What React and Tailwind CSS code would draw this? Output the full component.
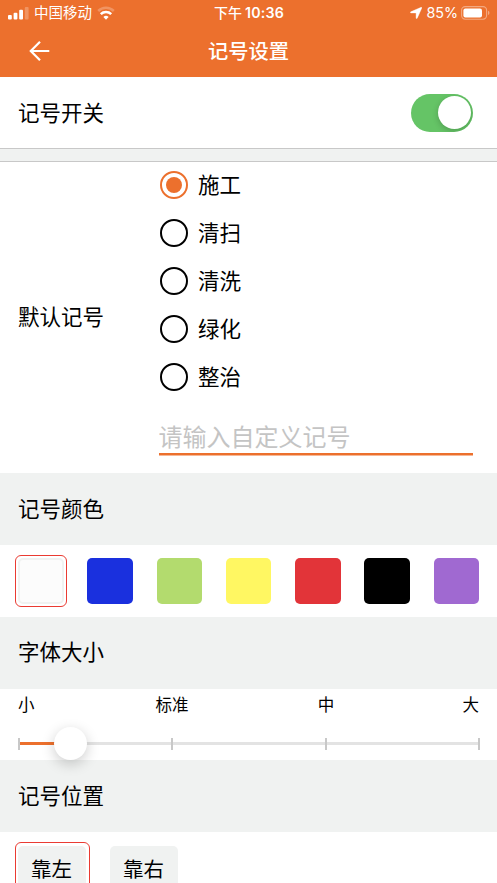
import React, { useState } from 'react';

const MARKS = ['施工', '清扫', '清洗', '绿化', '整治'];

const COLORS = [
  { name: 'white', className: 'bg-[#fcfcfc] border-2 border-[#f0f2f1]' },
  { name: 'blue', className: 'bg-[#1a30de]' },
  { name: 'green', className: 'bg-[#b3db6e]' },
  { name: 'yellow', className: 'bg-[#fff762]' },
  { name: 'red', className: 'bg-[#e23439]' },
  { name: 'black', className: 'bg-black' },
  { name: 'purple', className: 'bg-[#a069d1]' },
];

const SIZES = ['小', '标准', '中', '大'];

const StatusBar = () => (
  <div className="h-[26px] grid grid-cols-[1fr_auto_1fr] items-center pl-2 pr-[7px] text-[14.5px] leading-none">
    <div className="flex items-center">
      <svg width="21" height="13" viewBox="0 0 21 13" fill="#fff">
        <rect x="0" y="8" width="3.8" height="4.5" rx="1" />
        <rect x="5.6" y="5.8" width="3.8" height="6.7" rx="1" />
        <rect x="11.2" y="2.8" width="3.8" height="9.7" rx="1" />
        <rect x="16.8" y="0" width="3.8" height="12.5" rx="1" opacity="0.25" />
      </svg>
      <span className="ml-[5px] -mr-px pt-px">中国移动</span>
      <svg className="ml-[6px]" width="18" height="14" viewBox="0 0 18 14" fill="none" stroke="#fff" strokeWidth="2.5">
        <path d="M1.2 5a11 11 0 0 1 15.6 0" opacity="0.25" />
        <path d="M3.8 8.1a7.4 7.4 0 0 1 10.4 0" />
        <path d="M9 13.7L6.4 11.1a3.7 3.7 0 0 1 5.2 0z" fill="#fff" stroke="none" />
      </svg>
    </div>
    <div className="flex items-center gap-[3px] font-medium">
      <span className="text-[14px]">下午</span>
      <span className="font-['Inter'] font-semibold text-[14.2px] tracking-[0.2px]">10:36</span>
    </div>
    <div className="flex items-center justify-end">
      <svg width="12" height="12" viewBox="0 0 12 12" fill="#fff">
        <path d="M11.2 0.3c.5-.2.8.1.6.6L7.2 11.2c-.3.6-1.1.5-1.1-.2V5.9H1c-.7 0-.8-.8-.2-1.1z" stroke="#fff" strokeWidth="0.4" />
      </svg>
      <span className="ml-[4px] font-['Inter'] text-[14.3px]">85%</span>
      <svg className="ml-[3px]" width="29" height="14" viewBox="0 0 29 14">
        <rect x="0.6" y="0.6" width="25" height="12.6" rx="3.6" fill="none" stroke="#fff" strokeOpacity="0.4" strokeWidth="1.1" />
        <rect x="2.4" y="2.4" width="18.6" height="9" rx="2" fill="#fff" />
        <path d="M27.2 4.8c1.6.6 1.6 3.6 0 4.2z" fill="#fff" opacity="0.5" />
      </svg>
    </div>
  </div>
);

const SectionTitle = ({ children }) => (
  <h2 className="h-[72px] shrink-0 flex items-center pt-[3px] px-[18px] bg-[#f0f2f1] text-[21.5px]">{children}</h2>
);

const App = () => {
  const [enabled, setEnabled] = useState(true);
  const [mark, setMark] = useState('施工');
  const [custom, setCustom] = useState('');
  const [color, setColor] = useState('white');
  const [position, setPosition] = useState('靠左');

  return (
    <div className="h-screen overflow-hidden flex flex-col bg-white text-black leading-none font-['Liberation_Sans','Noto_Sans_CJK_SC',sans-serif]">
      {/* Header */}
      <header className="h-[77px] shrink-0 bg-[#ec702d] text-white">
        <StatusBar />
        <div className="h-[49px] grid grid-cols-[1fr_auto_1fr] items-center">
          <button className="ml-[29px] w-[21px]">
            <svg width="21" height="20" viewBox="0 0 21 20" fill="none" stroke="#fff" strokeWidth="2.2">
              <path d="M20.3 10H2M11 .8L1.8 10l9.2 9.2" />
            </svg>
          </button>
          <h1 className="text-[20.3px] font-medium pt-[3px]">记号设置</h1>
        </div>
      </header>

      {/* Switch */}
      <div className="h-[71px] shrink-0 flex items-center justify-between pl-[18px] pr-6">
        <span className="pt-[4px] text-[21.5px]">记号开关</span>
        <button
          onClick={() => setEnabled(!enabled)}
          className={`w-[62px] h-[38px] rounded-full p-[2.5px] flex items-center overflow-hidden ${enabled ? 'bg-[#65c466] justify-end' : 'bg-gray-300 justify-start'}`}
        >
          <span className="size-[33px] rounded-full bg-white shadow-[0_2px_6px_rgba(0,0,0,0.2)]" />
        </button>
      </div>
      <div className="h-[14px] shrink-0 bg-[#f0f2f1] border-y border-[#c8c8c8]" />

      {/* Default mark */}
      <div className="h-[311px] shrink-0 flex items-center pl-[18px] pr-6">
        <span className="w-[140.5px] shrink-0 pt-[2px] text-[21.5px]">默认记号</span>
        <div className="flex-1 self-stretch -mt-px">
          {MARKS.map((item) => (
            <label key={item} onClick={() => setMark(item)} className="h-12 flex items-center pl-[1.5px] text-[21.5px]">
              <span
                className={`size-7 rounded-full border-2 flex items-center justify-center ${mark === item ? 'border-[#ec702d]' : 'border-black'}`}
              >
                {mark === item && <span className="size-4 rounded-full bg-[#ec702d]" />}
              </span>
              <span className="ml-[10px] pt-[3px]">{item}</span>
            </label>
          ))}
          <input
            value={custom}
            onChange={(e) => setCustom(e.target.value)}
            placeholder="请输入自定义记号"
            className="mt-[13px] block w-full h-[41px] pt-[8px] border-b-2 border-[#ec702d] shadow-[0_0.5px_0_#ec702d] text-2xl leading-none outline-none placeholder:text-[#c4c4c4]"
          />
        </div>
      </div>

      {/* Color */}
      <SectionTitle>记号颜色</SectionTitle>
      <div className="h-[71.5px] shrink-0 flex items-center justify-between px-[14.5px]">
        {COLORS.map((c) => (
          <button
            key={c.name}
            onClick={() => setColor(c.name)}
            className={`size-[52.5px] rounded-[6px] border flex items-center justify-center ${color === c.name ? 'border-[#ea3b32]' : 'border-transparent'}`}
          >
            <span className={`size-[45.5px] rounded-[5px] ${c.className}`} />
          </button>
        ))}
      </div>

      {/* Font size */}
      <SectionTitle>字体大小</SectionTitle>
      <div className="h-[71.5px] shrink-0 pl-[18px] pr-[17px]">
        <div className="h-8 pt-px grid grid-cols-[1fr_2fr_2fr_1fr] items-center text-center text-[16.5px]">
          {SIZES.map((s) => (
            <span key={s} className="first:text-left last:text-right last:pr-px">
              {s}
            </span>
          ))}
        </div>
        <div className="relative z-10 mt-[17px] h-3 flex items-center justify-between">
          <div className="absolute left-px right-px h-[3px] bg-[#e3e3e3]" />
          <div className="absolute left-px w-[52px] h-[3px] bg-[#ec702d]" />
          {SIZES.map((s) => (
            <span key={s} className="relative w-[2px] h-3 bg-[#c8c8c8]" />
          ))}
          <span className="absolute left-9 size-[33px] rounded-full bg-white shadow-[0_4px_14px_rgba(0,0,0,0.2)]" />
        </div>
      </div>

      {/* Position */}
      <SectionTitle>记号位置</SectionTitle>
      <div className="flex gap-[17px] pt-[10px] px-[14.5px]">
        {['靠左', '靠右'].map((p) => (
          <button
            key={p}
            onClick={() => setPosition(p)}
            className={`w-[75px] h-[52px] shrink-0 rounded-[6px] border p-[2.5px] ${position === p ? 'border-[#ea3b32]' : 'border-transparent'}`}
          >
            <span className="h-full flex items-center justify-center pt-[4px] pr-px rounded-[5px] bg-[#f0f2f1] text-[20.5px]">{p}</span>
          </button>
        ))}
      </div>
    </div>
  );
};

export default App;
